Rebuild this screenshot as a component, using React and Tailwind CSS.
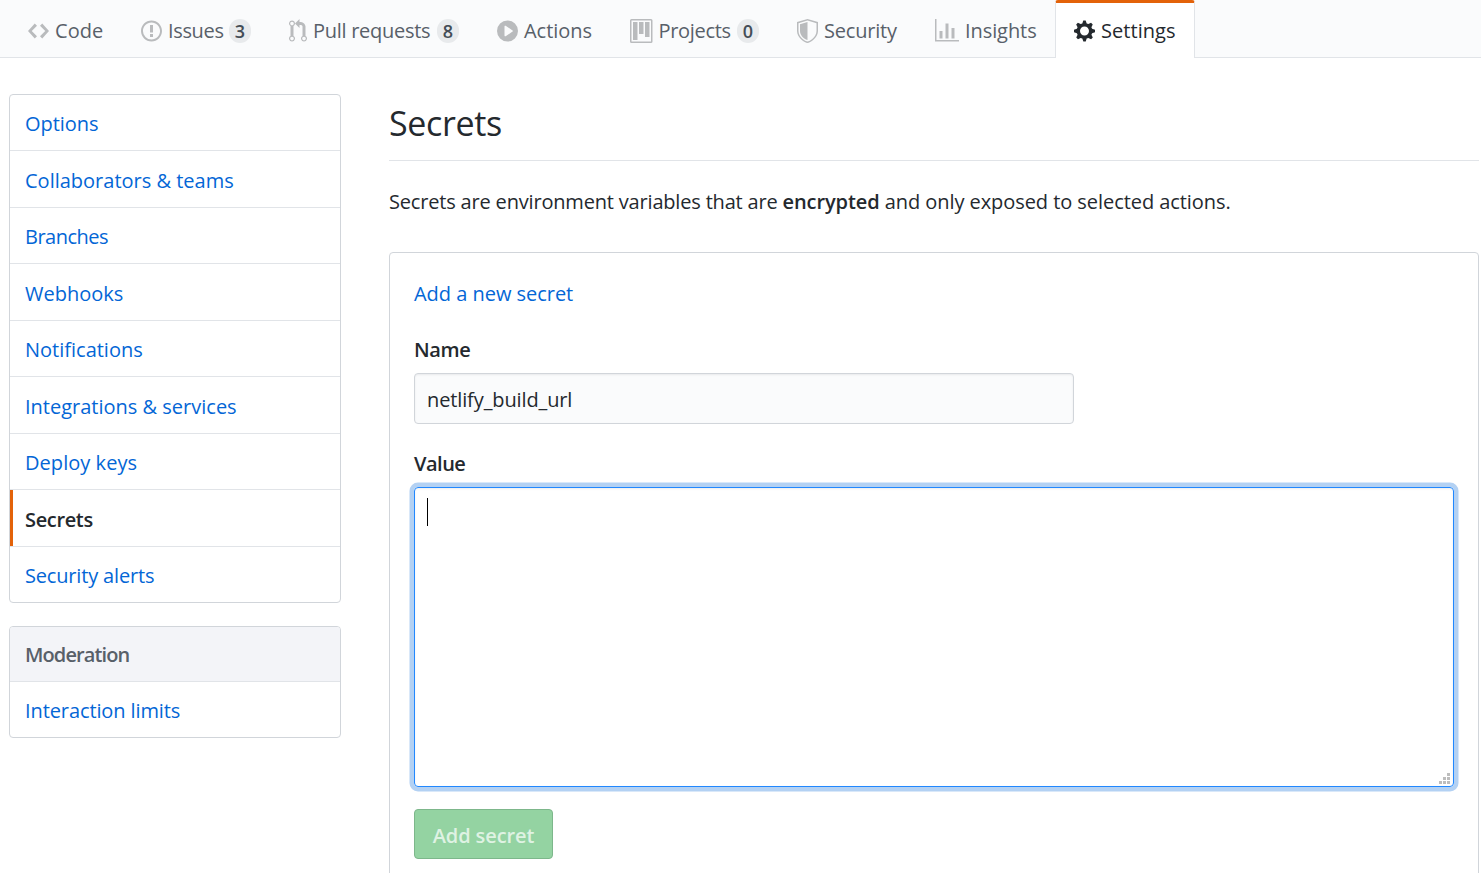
const ICONS = {
  code: [14, "M9.5 3L8 4.5 11.5 8 8 11.5 9.5 13 14 8 9.5 3zm-5 0L0 8l4.5 5L6 11.5 2.5 8 6 4.5 4.5 3z"],
  issue: [14, "M7 2.3c3.14 0 5.7 2.56 5.7 5.7s-2.56 5.7-5.7 5.7A5.71 5.71 0 0 1 1.3 8c0-3.14 2.56-5.7 5.7-5.7zM7 1C3.14 1 0 4.14 0 8s3.14 7 7 7 7-3.14 7-7-3.14-7-7-7zm1 3H6v5h2V4zm0 6H6v2h2v-2z"],
  pull: [12, "M11 11.28V5c-.03-.78-.34-1.47-.94-2.06C9.46 2.35 8.78 2.03 8 2H7V0L4 3l3 3V4h1c.27.02.48.11.69.31.21.2.3.42.31.69v6.28A1.993 1.993 0 0 0 10 15a1.993 1.993 0 0 0 1-3.72zm-1 2.92c-.66 0-1.2-.55-1.2-1.2 0-.65.55-1.2 1.2-1.2.65 0 1.2.55 1.2 1.2 0 .65-.55 1.2-1.2 1.2zM4 3c0-1.11-.89-2-2-2a1.993 1.993 0 0 0-1 3.72v6.56A1.993 1.993 0 0 0 2 15a1.993 1.993 0 0 0 1-3.72V4.72c.59-.34 1-.98 1-1.72zm-.8 10c0 .66-.55 1.2-1.2 1.2-.65 0-1.2-.55-1.2-1.2 0-.65.55-1.2 1.2-1.2.65 0 1.2.55 1.2 1.2zM2 4.2C1.34 4.2.8 3.65.8 3c0-.65.55-1.2 1.2-1.2.65 0 1.2.55 1.2 1.2 0 .65-.55 1.2-1.2 1.2z"],
  play: [14, "M14 8A7 7 0 1 1 0 8a7 7 0 0 1 14 0zm-8.223 3.482l4.599-3.066a.5.5 0 0 0 0-.832L5.777 4.518A.5.5 0 0 0 5 4.934v6.132a.5.5 0 0 0 .777.416z"],
  project: [15, "M10 12h3V2h-3v10zm-4-2h3V2H6v8zm-4 4h3V2H2v12zm-1 1h13V1H1v14zM14 0H1a1 1 0 0 0-1 1v14a1 1 0 0 0 1 1h13a1 1 0 0 0 1-1V1a1 1 0 0 0-1-1z"],
  shield: [14, "M0 2l7-2 7 2v6.02C14 12.69 8.69 16 7 16c-1.69 0-7-3.31-7-7.98V2zm1 .75L7 1l6 1.75v5.268C13 12.104 8.449 15 7 15c-1.449 0-6-2.896-6-6.982V2.75zm1 .75L7 2v12c-1.207 0-5-2.482-5-5.985V3.5z"],
  graph: [16, "M16 14v1H0V0h1v14h15zM5 13H3V8h2v5zm4 0H7V3h2v10zm4 0h-2V6h2v7z"],
  gear: [14, "M14 8.77v-1.6l-1.94-.64-.45-1.09.88-1.84-1.13-1.13-1.81.91-1.09-.45-.69-1.92h-1.6l-.63 1.94-1.11.45-1.84-.88-1.13 1.13.91 1.81-.45 1.09L0 7.23v1.59l1.94.64.45 1.09-.88 1.84 1.13 1.13 1.81-.91 1.09.45.69 1.92h1.59l.63-1.94 1.11-.45 1.84.88 1.13-1.13-.92-1.81.47-1.09L14 8.75v.02zM7 11c-1.66 0-3-1.34-3-3s1.34-3 3-3 3 1.34 3 3-1.34 3-3 3z"],
};

function Icon({ name, className }) {
  const [w, d] = ICONS[name];
  return (
    <svg width={w * 1.5} height="24" viewBox={`0 0 ${w} 16`} fill="currentColor" fillRule="evenodd" className={`shrink-0 ${className}`}>
      <path d={d} />
    </svg>
  );
}

const TABS = [
  { icon: "code", label: "Code", width: "w-[113px]", track: "tracking-[0.05px]" },
  { icon: "issue", label: "Issues", count: 3, width: "w-[148px]", track: "tracking-[-0.35px]" },
  { icon: "pull", label: "Pull requests", count: 8, width: "w-[208px]", track: "tracking-[-0.28px]" },
  { icon: "play", label: "Actions", width: "w-[133px]", track: "tracking-[-0.05px]" },
  { icon: "project", label: "Projects", count: 0, width: "w-[167px]", track: "tracking-[-0.3px]" },
  { icon: "shield", label: "Security", width: "w-[138px]", track: "tracking-[-0.2px]" },
  { icon: "graph", label: "Insights", width: "w-[139px]", track: "tracking-[-0.08px]" },
];

const MENU = [
  ["Options", "h-[56px]", "tracking-[-0.05px]"],
  ["Collaborators & teams", "h-[57px]", "tracking-normal"],
  ["Branches", "h-[56px]", "tracking-[-0.5px]"],
  ["Webhooks", "h-[57px]", "tracking-normal"],
  ["Notifications", "h-[56px]", "tracking-normal"],
  ["Integrations & services", "h-[57px]", "tracking-normal"],
  ["Deploy keys", "h-[56px]", "tracking-[0.05px]"],
  ["Secrets", "h-[57px]", "tracking-[-0.35px]"],
  ["Security alerts", "h-[55px]", "tracking-[-0.17px]"],
];

function Tabs() {
  return (
    <nav className="flex h-[58px] border-b border-[#e1e4e8] bg-[#fafbfc] pl-[9px] text-[#586069]">
      {TABS.map((t) => (
        <a key={t.label} className={`flex h-[57px] shrink-0 items-center whitespace-nowrap pl-[19px] pt-[5px] ${t.width}`}>
          <Icon name={t.icon} className="text-[#b9bbbd]" />
          <span className={`ml-[6px] pb-[2px] ${t.track}`}>{t.label}</span>
          {t.count !== undefined && (
            <span className="ml-auto mr-[19px] flex h-6 w-[22px] items-center justify-center rounded-full bg-[#e8eaec] text-[18px] font-semibold text-[#444d56]">
              {t.count}
            </span>
          )}
        </a>
      ))}
      <a className="flex h-[58px] w-[140px] shrink-0 items-center rounded-t-[3px] border-x border-t-3 border-x-[#e1e4e8] border-t-[#e36209] bg-white pl-[18px] pt-[1px] text-[#24292e]">
        <Icon name="gear" className="" />
        <span className="ml-[6px] pb-[2px] tracking-[0.05px]">Settings</span>
      </a>
    </nav>
  );
}

function Sidebar() {
  return (
    <aside className="w-[332px] shrink-0">
      <div className="overflow-hidden rounded-[4px] border border-[#d1d5da] text-[#0366d6]">
        {MENU.map(([label, height, track]) => {
          const selected = label === "Secrets";
          return (
            <a
              key={label}
              className={`flex items-center border-[#e1e4e8] ${height} ${track} ${label === "Security alerts" ? "" : "border-b"} ${selected ? "font-semibold text-[#24292e]" : "pl-[15px]"}`}
            >
              {selected && <span className="mr-3 w-[3px] self-stretch bg-[#e36209]" />}
              <span className="pt-[2px]">{label}</span>
            </a>
          );
        })}
      </div>
      <div className="mt-[23px] overflow-hidden rounded-[4px] border border-[#d1d5da]">
        <div className="flex h-[55px] items-center border-b border-[#e1e4e8] bg-[#f3f4f8] pl-[15px] pt-px font-semibold tracking-[-0.9px] text-[#586069]">Moderation</div>
        <a className="flex h-[55px] items-center pl-[15px] pt-[2px] tracking-[-0.1px] text-[#0366d6]">Interaction limits</a>
      </div>
    </aside>
  );
}

function ResizeGrip() {
  return (
    <svg width="11" height="11" viewBox="0 0 11 11" fill="#bdbdbd" shapeRendering="crispEdges">
      <path d="M8 0h3v3H8zM4 4h3v3H4zM8 4h3v3H8zM0 8h3v3H0zM4 8h3v3H4zM8 8h3v3H8z" />
    </svg>
  );
}

function SecretForm() {
  return (
    <section className="mt-[35px] h-[640px] rounded-[4px] border border-[#d1d5da] px-6 pt-[25px] leading-[31px]">
      <a className="block tracking-[-0.03px] text-[#0366d6]">Add a new secret</a>
      <div className="mt-[25px] font-semibold tracking-[-0.4px]">Name</div>
      <div className="mt-[8px] flex h-[51px] w-[660px] items-center rounded-[4px] border border-[#d1d5da] bg-[#fafbfc] pl-3 pt-[2px] tracking-[-0.12px] shadow-[inset_0_1px_2px_rgba(27,31,35,0.075)]">
        netlify_build_url
      </div>
      <div className="mt-[24px] font-semibold tracking-[-0.5px]">Value</div>
      <div className="mt-[8px] flex h-[300px] w-[1040px] items-start justify-between rounded-[4px] border border-[#2188ff] pl-3 pr-[3px] pt-[10px] shadow-[inset_0_1px_2px_rgba(27,31,35,0.075),0_0_0_4.5px_rgba(3,102,214,0.3)]">
        <span className="h-7 w-px bg-black" />
        <span className="mb-[2px] self-end"><ResizeGrip /></span>
      </div>
      <button className="mt-[22px] flex h-[50px] w-[139px] items-center justify-center rounded-[4px] border border-[#7db78b] bg-[#94d3a2] pt-[2px] font-semibold tracking-[-0.1px] text-[#dff2e3]">
        Add secret
      </button>
    </section>
  );
}

export default function App() {
  return (
    <div className="h-[873px] w-[1481px] overflow-hidden bg-white font-['Open_Sans','Noto_Sans',sans-serif] text-[20px] leading-[31px] text-[#24292e]">
      <Tabs />
      <div className="flex pl-[9px] pt-[36px]">
        <Sidebar />
        <main className="ml-12 w-[1090px] shrink-0">
          <h1 className="h-[67px] border-b border-[#e1e4e8] pt-[7px] text-[34px] leading-[44px] tracking-[-0.35px]">Secrets</h1>
          <p className="mt-[25px] whitespace-nowrap tracking-[-0.18px]">
            Secrets are environment variables that are <b className="font-semibold tracking-[-0.1px]">encrypted</b>
            <span className="tracking-[-0.06px]"> and only exposed to selected actions.</span>
          </p>
          <SecretForm />
        </main>
      </div>
    </div>
  );
}
